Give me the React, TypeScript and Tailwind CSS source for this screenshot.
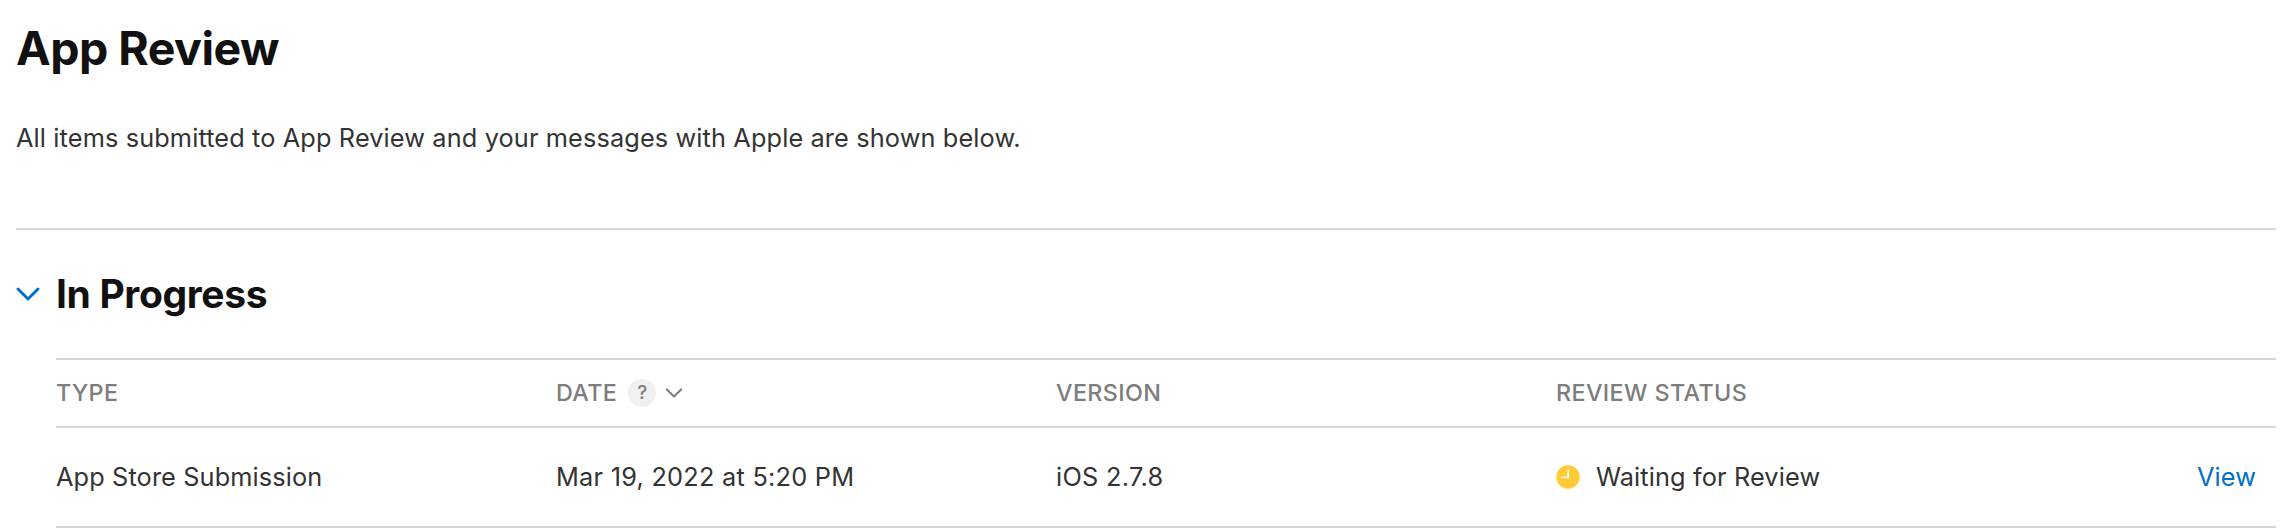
const columns = ['Type', 'Date', 'Version', 'Review Status']

const submissions = [
  {
    type: 'App Store Submission',
    date: 'Mar 19, 2022 at 5:20 PM',
    version: 'iOS 2.7.8',
    status: 'Waiting for Review',
  },
]

function Chevron({ className }: { className: string }) {
  return (
    <svg className={className} viewBox="0 0 24 14" fill="none" stroke="currentColor" aria-hidden="true">
      <path d="M2 2l10 10L22 2" strokeWidth="2.9" strokeLinecap="round" strokeLinejoin="round" />
    </svg>
  )
}

function PendingIcon() {
  return (
    <svg className="size-6 shrink-0" viewBox="0 0 24 24" aria-hidden="true">
      <circle cx="12" cy="12" r="11.7" fill="#ffcc33" />
      <path d="M12.2 4.8v7.7H5.6" fill="none" stroke="#fff" strokeWidth="1.6" strokeLinecap="round" strokeLinejoin="round" />
    </svg>
  )
}

export default function App() {
  return (
    <div className="h-[528px] overflow-hidden bg-white pr-5 pl-4 font-['Inter',sans-serif] text-[25.3px] tracking-[0.13px] text-[#333333]">
      <header className="flex h-[230px] flex-col border-b-2 border-[#d6d6d6]">
        <h1 className="mt-[19px] text-[46.5px] leading-[58px] font-bold tracking-[-0.52px] text-[#111111]">App Review</h1>
        <p className="mt-[41px] leading-10">
          All items submitted to App Review and your messages with Apple are shown below.
        </p>
      </header>

      <section>
        <button type="button" className="flex h-[128px] w-full items-center pb-px text-left">
          <Chevron className="mr-4 h-[14px] w-6 text-[#0070c9]" />
          <h2 className="text-[39px] leading-[48px] font-bold tracking-[-0.35px] text-[#111111]">In Progress</h2>
        </button>

        <div className="ml-10">
          <div className="grid h-[70px] grid-cols-[500px_500px_500px_500px_1fr] items-center border-y-2 border-[#d6d6d6] text-[23.3px] font-medium tracking-[0.4px] text-[#7d7d7d] uppercase">
            {columns.map((column) => (
              <div key={column} className="flex items-center">
                {column}
                {column === 'Date' && (
                  <>
                    <span className="ml-[11px] flex size-7 items-center justify-center rounded-full bg-[#f0f0f0] text-[19px] tracking-normal">
                      ?
                    </span>
                    <Chevron className="ml-[9px] h-[10px] w-[18px]" />
                  </>
                )}
              </div>
            ))}
          </div>

          {submissions.map((item) => (
            <div
              key={item.type}
              className="grid h-[100px] grid-cols-[500px_500px_500px_500px_1fr] items-center border-b-2 border-[#d6d6d6]"
            >
              <div>{item.type}</div>
              <div className="tracking-[0.25px]">{item.date}</div>
              <div className="tracking-[0.3px]">{item.version}</div>
              <div className="flex items-center gap-4">
                <PendingIcon />
                {item.status}
              </div>
              <a href="#" className="justify-self-end pr-5 text-[#0070c9]">
                View
              </a>
            </div>
          ))}
        </div>
      </section>
    </div>
  )
}
